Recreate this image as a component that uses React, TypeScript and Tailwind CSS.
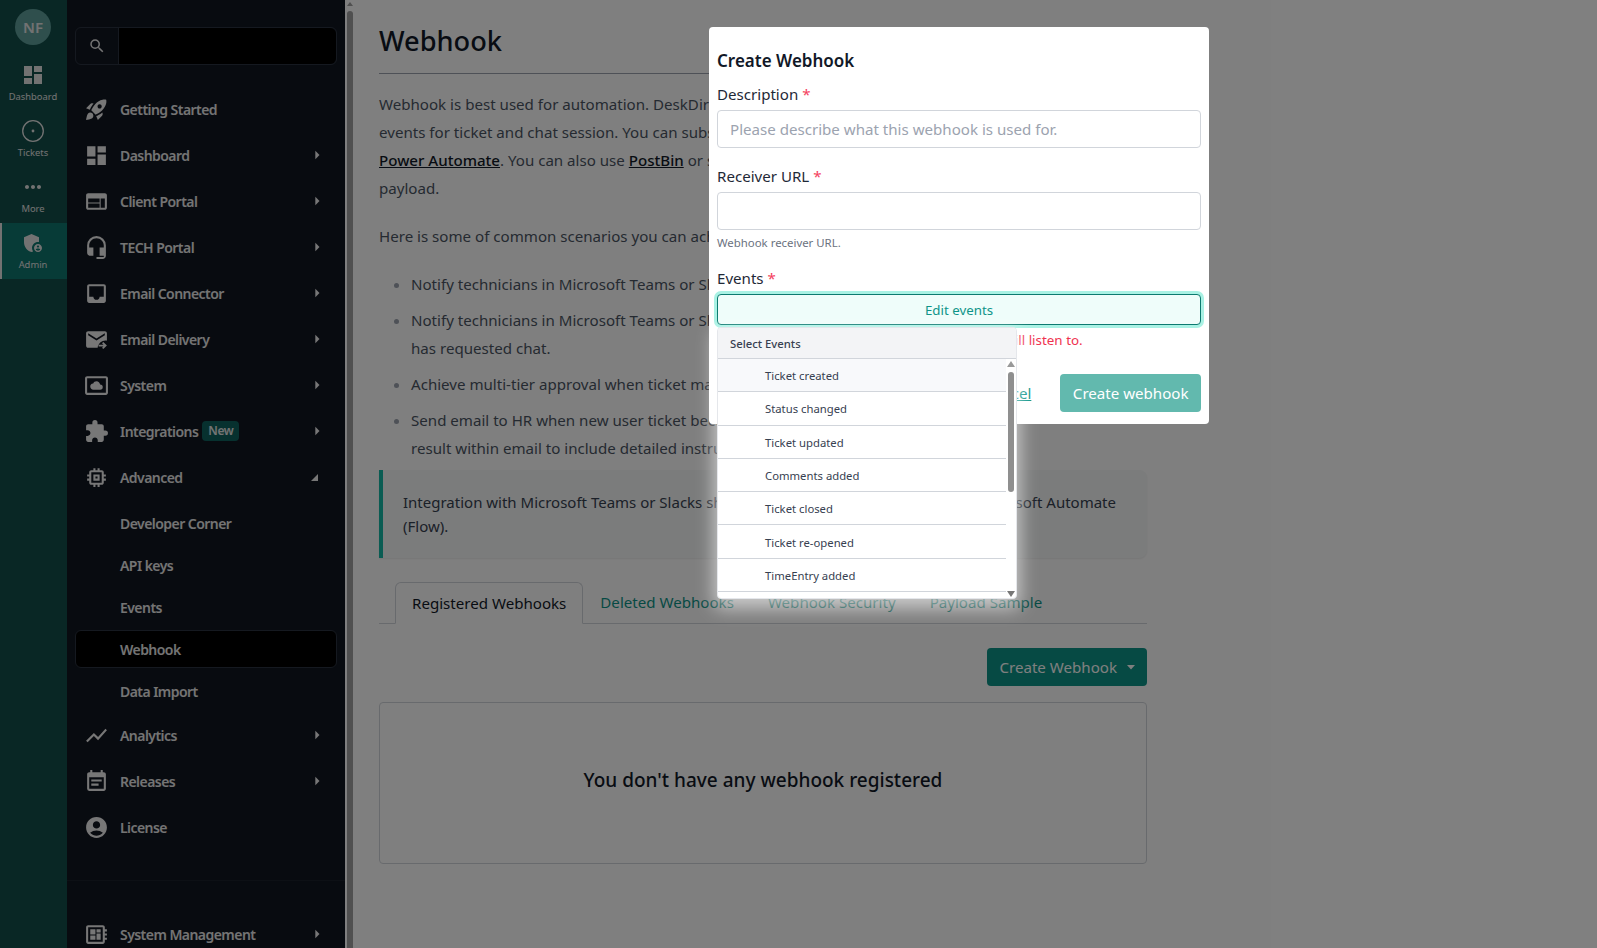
import React from "react";
import {
  MdDashboard, MdRocketLaunch, MdWeb, MdHeadsetMic, MdInbox,
  MdSettingsSystemDaydream, MdExtension, MdOutlineMemory, MdShowChart,
  MdEventNote, MdAccountCircle, MdOutlineDeveloperBoard, MdSearch, MdMoreHoriz,
  MdAdminPanelSettings, MdArrowRight,
} from "react-icons/md";

const font = { fontFamily: '"Noto Sans", "Open Sans", sans-serif' };

function Row({ icon, label, arrow = true, badge }: { icon: React.ReactNode; label: string; arrow?: boolean; badge?: string }) {
  return (
    <div className="flex h-[46px] shrink-0 items-center pl-[16px] pr-[18px] text-[14px] font-semibold text-[#e8e8e8]">
      <span className="flex w-[26px] justify-center text-[25px] text-[#eeeeee]">{icon}</span>
      <span className="ml-[11px] tracking-[-0.55px]">{label}</span>
      {badge && <span className="ml-[4px] rounded-[4px] bg-[#0f766e]/80 px-[6px] py-[1px] text-[12px] leading-[18px] tracking-[-0.4px]">{badge}</span>}
      {arrow && <MdArrowRight className="ml-auto text-[20px] text-[#eeeeee]" />}
    </div>
  );
}

function Sub({ label, active }: { label: string; active?: boolean }) {
  return (
    <div className={`mx-[8px] my-[2px] flex h-[38px] shrink-0 items-center rounded-[6px] text-[14px] font-semibold tracking-[-0.55px] text-[#e8e8e8] ${active ? "border border-[#2b3340] bg-black pl-[44px]" : "pl-[45px]"}`}>
      {label}
    </div>
  );
}

function RailItem({ icon, label, active }: { icon: React.ReactNode; label: string; active?: boolean }) {
  return (
    <div className={`flex h-[56px] shrink-0 flex-col items-center justify-end pb-[7px] text-[#e5e5e5] ${active ? "border-l-2 border-[#e5e5e5] bg-[#0f766e] pr-[3px]" : "pr-[1px]"}`}>
      <span className="flex h-[26px] items-center text-[24px]">{icon}</span>
      <span className="mt-[2px] text-[9.4px] leading-[14px]">{label}</span>
    </div>
  );
}

function MailSend() {
  return (
    <svg width="1em" height="1em" viewBox="0 0 24 24" fill="currentColor">
      <path d="M20 4H4c-1.1 0-2 .9-2 2v12c0 1.1.9 2 2 2h9.1c.4-3.9 3.7-7 7.7-7 .4 0 .8 0 1.2.1V6c0-1.1-.9-2-2-2zm0 4-8 5-8-5V6l8 5 8-5v2z" />
      <path d="M18.5 14.5 17.3 15.7l1.4 1.3H14v1.7h4.7l-1.4 1.3 1.2 1.2 3.5-3.5z" />
    </svg>
  );
}

const events = ["Ticket created", "Status changed", "Ticket updated", "Comments added", "Ticket closed", "Ticket re-opened", "TimeEntry added"];

export default function App() {
  return (
    <div className="relative flex h-[948px] w-[1597px] overflow-hidden bg-white" style={font}>
      <aside className="flex w-[67px] shrink-0 flex-col bg-[#134e4a]">
        <div className="mt-[9px] mb-[10px] ml-[15px] flex h-[36px] w-[36px] shrink-0 items-center justify-center rounded-full bg-[#5f9f9b] text-[15px] font-semibold text-[#e5e5e5]">NF</div>
        <RailItem icon={<MdDashboard />} label="Dashboard" />
        <RailItem icon={<svg width="24" height="24" viewBox="0 0 24 24" fill="none"><circle cx="12" cy="12" r="10.3" stroke="currentColor" strokeWidth="1.3" /><circle cx="12" cy="12" r="1.4" fill="currentColor" /></svg>} label="Tickets" />
        <RailItem icon={<MdMoreHoriz />} label="More" />
        <RailItem icon={<MdAdminPanelSettings />} label="Admin" active />
      </aside>

      <nav className="flex w-[278px] shrink-0 flex-col overflow-hidden bg-[#111620]">
        <div className="mx-[8px] mt-[27px] mb-[21px] flex h-[38px] shrink-0 rounded-[6px] border border-[#2b3340]">
          <div className="flex w-[43px] items-center justify-center border-r border-[#2b3340] text-[#e8e8e8]"><MdSearch className="text-[18px]" /></div>
          <div className="flex-1 rounded-r-[6px] bg-black" />
        </div>
        <Row icon={<MdRocketLaunch />} label="Getting Started" arrow={false} />
        <Row icon={<MdDashboard />} label="Dashboard" />
        <Row icon={<MdWeb />} label="Client Portal" />
        <Row icon={<MdHeadsetMic />} label="TECH Portal" />
        <Row icon={<MdInbox />} label="Email Connector" />
        <Row icon={<MailSend />} label="Email Delivery" />
        <Row icon={<MdSettingsSystemDaydream />} label="System" />
        <Row icon={<MdExtension />} label="Integrations" badge="New" />
        <div className="mb-[2px] flex h-[46px] shrink-0 items-center pl-[16px] pr-[27px] text-[14px] font-semibold text-[#e8e8e8]">
          <span className="flex w-[26px] justify-center text-[25px] text-[#eeeeee]"><MdOutlineMemory /></span>
          <span className="ml-[11px] tracking-[-0.55px]">Advanced</span>
          <svg className="ml-auto" width="7" height="7" viewBox="0 0 7 7"><path d="M7 0V7H0Z" fill="#eeeeee" /></svg>
        </div>
        <Sub label="Developer Corner" />
        <Sub label="API keys" />
        <Sub label="Events" />
        <Sub label="Webhook" active />
        <Sub label="Data Import" />
        <Row icon={<MdShowChart />} label="Analytics" />
        <Row icon={<MdEventNote />} label="Releases" />
        <Row icon={<MdAccountCircle />} label="License" arrow={false} />
        <div className="mt-[30px] shrink-0 border-t border-[#1a202b]" />
        <div className="mt-[30px] shrink-0"><Row icon={<MdOutlineDeveloperBoard />} label="System Management" /></div>
      </nav>

      <div className="flex w-[8px] shrink-0 flex-col items-end bg-white">
        <svg className="mt-[2px] shrink-0" width="6" height="6" viewBox="0 0 6 6"><path d="M3 0 6 4H0Z" fill="#a0a0a0" /></svg>
        <div className="mt-[3px] w-[6px] flex-1 rounded-t-full bg-[#a0a0a0]" />
      </div>

      <main className="ml-[26px] w-[768px] shrink-0 text-[15.1px] text-[#4b5563]">
        <h1 className="mt-[23px] text-[27.2px] leading-[36px] font-medium text-[#111827]">Webhook</h1>
        <hr className="mt-[14px] border-[#9ca3af]" />
        <p className="mt-[16px] leading-[28px]">
          Webhook is best used for automation. DeskDirector can trigger webhooks on a range of<br />
          events for ticket and chat session. You can subscribe them with Zapier or Microsoft<br />
          <a className="font-medium text-[#111827] underline">Power Automate</a>. You can also use <a className="font-medium text-[#111827] underline">PostBin</a> or similar services to inspect the<br />
          payload.
        </p>
        <p className="mt-[20px] leading-[28px]">Here is some of common scenarios you can achieve with webhook:</p>
        <ul className="mt-[20px] flex list-disc flex-col gap-[8px] pl-[32px] leading-[28px] marker:text-[#9ca3af]">
          <li>Notify technicians in Microsoft Teams or Slack when a ticket is assigned.</li>
          <li>Notify technicians in Microsoft Teams or Slack when a client<br />has requested chat.</li>
          <li>Achieve multi-tier approval when ticket matches the criteria.</li>
          <li>Send email to HR when new user ticket becomes approved, and use<br />result within email to include detailed instructions.</li>
        </ul>
        <div className="mt-[8px] rounded-r-[8px] border-l-4 border-[#14b8a6] bg-[#f6f9f8] py-[20px] pr-[24px] pl-[20px] text-[15px] leading-[24px] text-[#374151] shadow-[0_1px_2px_rgba(0,0,0,0.08)]">
          Integration with Microsoft Teams or Slacks should only ever be done through the Microsoft Automate<br />(Flow).
        </div>
        <div className="mt-[24px] flex h-[42px] border-b border-[#d1d5db] pl-[16px]">
          <div className="-mb-px flex h-[42px] items-center rounded-t-[6px] border border-[#d1d5db] border-b-white bg-white px-[16px] text-[#111827]">Registered Webhooks</div>
          <div className="flex items-center px-[17px] text-[#0d9488]">Deleted Webhooks</div>
          <div className="flex items-center px-[17px] text-[#0d9488]">Webhook Security</div>
          <div className="flex items-center px-[17px] text-[#0d9488]">Payload Sample</div>
        </div>
        <div className="mt-[24px] flex justify-end">
          <button className="flex h-[38px] items-center rounded-[4px] bg-[#0d9488] px-[12px] text-white">
            Create Webhook
            <svg className="ml-[10px]" width="8" height="5" viewBox="0 0 8 5"><path d="M0 0H8L4 4.5Z" fill="#fff" /></svg>
          </button>
        </div>
        <div className="mt-[16px] h-[162px] rounded-[4px] border border-[#d1d5db] pt-[63px] text-center text-[19px] leading-[28px] font-medium text-[#111827]">
          You don't have any webhook registered
        </div>
      </main>

      <div className="absolute inset-0 bg-black/50" />

      <div className="absolute left-[709px] top-[27px] h-[397px] w-[500px] rounded-[4px] bg-white px-[8px] pt-[20px] text-[15.1px] text-[#1f2937]">
        <h2 className="text-[17px] leading-[28px] font-semibold text-[#111827]">Create Webhook</h2>
        <div className="mt-[7px] leading-[24px]">Description <span className="text-[#f43f5e]">*</span></div>
        <div className="mt-[4px] flex h-[38px] items-center rounded-[4px] border border-[#d1d5db] px-[12px] text-[#9ca3af]">Please describe what this webhook is used for.</div>
        <div className="mt-[16px] leading-[24px]">Receiver URL <span className="text-[#f43f5e]">*</span></div>
        <div className="mt-[4px] h-[38px] rounded-[4px] border border-[#d1d5db]" />
        <div className="mt-[5px] text-[11.4px] leading-[16px] text-[#6b7280]">Webhook receiver URL.</div>
        <div className="mt-[15px] leading-[24px]">Events <span className="text-[#f43f5e]">*</span></div>
        <div className="relative mt-[4px]">
          <button className="flex h-[31px] w-full items-center justify-center rounded-[4px] border border-[#0d7a70] bg-[#effdfa] pt-[2px] text-[13.3px] text-[#0d9488] ring-[3px] ring-[#a9f2e4]">Edit events</button>
          <div className="absolute left-0 top-[33px] z-10 h-[272px] w-[300px] overflow-hidden rounded-[4px] border border-[#e5e7eb] bg-white text-[11.3px] text-[#374151] shadow-[0_6px_18px_3px_rgba(255,255,255,0.6)]">
            <div className="flex h-[31px] items-center border-b border-[#d1d5db] bg-[#f3f4f6] px-[12px] pt-[2px] font-medium">Select Events</div>
            <div className="flex">
              <div className="flex-1">
                {events.map((e, i) => (
                  <div key={e} className={`flex h-[33.3px] items-center border-b border-[#d1d5db] pt-[3px] pl-[47px] ${i === 0 ? "bg-[#f8f9fb]" : ""}`}>{e}</div>
                ))}
              </div>
              <div className="flex h-[240px] w-[10px] flex-col items-center py-[2px]">
                <svg className="shrink-0" width="8" height="6" viewBox="0 0 8 6"><path d="M4 0 8 6H0Z" fill="#999" /></svg>
                <div className="mt-[5px] mb-auto h-[120px] w-[6px] rounded-full bg-[#8f8f8f]" />
                <svg className="shrink-0" width="8" height="6" viewBox="0 0 8 6"><path d="M0 0H8L4 6Z" fill="#777" /></svg>
              </div>
            </div>
          </div>
        </div>
        <div className="mt-[5px] text-[13.4px] leading-[20px] text-[#ef3350]">Please select all the events that this webhook will listen to.</div>
        <div className="mt-[24px] flex items-center justify-end">
          <a className="mr-[29px] text-[#0d9488] underline">Cancel</a>
          <button className="flex h-[38px] items-center rounded-[4px] bg-[#62b9ae] px-[12.5px] text-white">Create webhook</button>
        </div>
      </div>
    </div>
  );
}
